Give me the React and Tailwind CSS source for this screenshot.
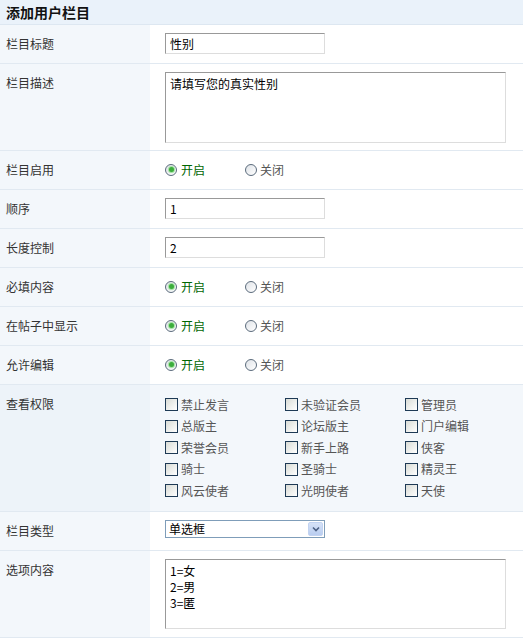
import React from "react";

const font = { fontFamily: '"Noto Sans CJK SC", "Liberation Sans", sans-serif' };

function Row({ label, children, hover = false, h = "h-[39px]" }) {
  return (
    <div className={`grid grid-cols-[150px_1fr] ${h} border-b border-[#e1e9f1] ${hover ? "bg-[#f3f7fb]" : ""}`}>
      <div className={`px-[6px] pt-[8px] leading-[21px] text-[#333] ${hover ? "bg-[#edf3f9]" : "bg-[#f3f7fb]"}`}>
        {label}
      </div>
      <div className="pl-[15px] pt-[8px]">{children}</div>
    </div>
  );
}

function TextInput({ value }) {
  return (
    <div className="w-[160px] h-[21px] border border-t-[#999] border-l-[#999] border-r-[#ddd] border-b-[#ddd] bg-white pl-[4px] leading-[19px] text-black">
      {value}
    </div>
  );
}

function TextArea({ lines, height }) {
  return (
    <div
      className={`w-[341px] ${height} border border-t-[#999] border-l-[#999] border-r-[#ddd] border-b-[#ddd] bg-white px-[4px] pt-[3px] text-black`}
    >
      {lines.map((l, i) => (
        <div key={i} className="h-[16px] leading-[16px]">{l}</div>
      ))}
    </div>
  );
}

function Radio({ checked }) {
  return (
    <span className="relative inline-flex w-[12px] h-[12px] rounded-full border border-[#5b6b7c] bg-gradient-to-br from-[#dfe3e8] to-white items-center justify-center">
      {checked && <span className="w-[5px] h-[5px] rounded-full bg-[#3cad3c] shadow-[0_0_1px_1px_#9be09b]" />}
    </span>
  );
}

function RadioGroup({ on = true }) {
  return (
    <div className="flex items-center h-[21px]">
      <div className="flex items-center w-[80px]">
        <Radio checked={on} />
        <span className="ml-[4px] text-[#006600]">开启</span>
      </div>
      <div className="flex items-center">
        <Radio checked={!on} />
        <span className="ml-[3px] text-[#555]">关闭</span>
      </div>
    </div>
  );
}

function Check({ label }) {
  return (
    <div className="flex items-center h-[21.5px]">
      <span className="w-[13px] h-[13px] border border-[#1e3a55] bg-gradient-to-br from-[#d9dcd6] to-white" />
      <span className="ml-[3px] text-[#555]">{label}</span>
    </div>
  );
}

const perms = [
  "禁止发言", "未验证会员", "管理员",
  "总版主", "论坛版主", "门户编辑",
  "荣誉会员", "新手上路", "侠客",
  "骑士", "圣骑士", "精灵王",
  "风云使者", "光明使者", "天使",
];

export default function App() {
  return (
    <div className="w-[523px] h-[638px] bg-white text-[12px] overflow-hidden" style={font}>
      <div className="h-[25px] bg-[#eaf2fa] border-b border-[#dde7f1] px-[6px] leading-[24px] font-bold text-[14px] text-[#111]">
        添加用户栏目
      </div>
      <Row label="栏目标题">
        <TextInput value="性别" />
      </Row>
      <Row label="栏目描述" h="h-[87px]">
        <TextArea lines={["请填写您的真实性别"]} height="h-[71px]" />
      </Row>
      <Row label="栏目启用">
        <RadioGroup />
      </Row>
      <Row label="顺序">
        <TextInput value="1" />
      </Row>
      <Row label="长度控制">
        <TextInput value="2" />
      </Row>
      <Row label="必填内容">
        <RadioGroup />
      </Row>
      <Row label="在帖子中显示">
        <RadioGroup />
      </Row>
      <Row label="允许编辑">
        <RadioGroup />
      </Row>
      <Row label="查看权限" hover h="h-[127px]">
        <div className="grid grid-cols-[120px_120px_120px] pt-[1px]">
          {perms.map((p) => (
            <Check key={p} label={p} />
          ))}
        </div>
      </Row>
      <Row label="栏目类型">
        <div className="flex items-center w-[160px] h-[18px] border border-[#7f9db9] bg-white">
          <span className="flex-1 pl-[3px] leading-[16px] text-black">单选框</span>
          <span className="w-[15px] h-[14px] mr-[1px] rounded-[2px] bg-gradient-to-b from-[#d6e2f7] to-[#b9cdf0] border border-[#c2d3f1] flex items-center justify-center">
            <svg width="8" height="6" viewBox="0 0 8 6">
              <path d="M1 1.5 L4 4.5 L7 1.5" fill="none" stroke="#4d6185" strokeWidth="1.6" />
            </svg>
          </span>
        </div>
      </Row>
      <Row label="选项内容" h="h-[87px]">
        <TextArea lines={["1=女", "2=男", "3=匿"]} height="h-[70px]" />
      </Row>
    </div>
  );
}
